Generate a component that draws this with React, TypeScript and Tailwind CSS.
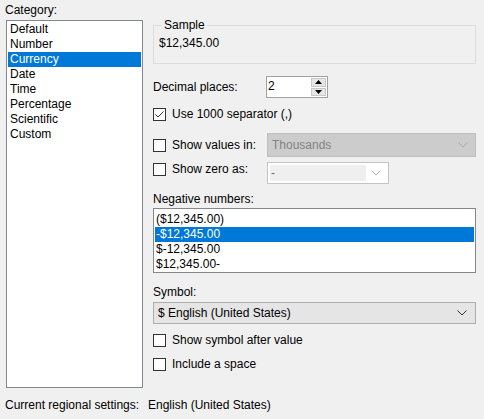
import React from "react"

const categories = ["Default", "Number", "Currency", "Date", "Time", "Percentage", "Scientific", "Custom"]
const negatives = ["($12,345.00)", "-$12,345.00", "$-12,345.00", "$12,345.00-"]

function Chevron({ color = "#606060" }: { color?: string }) {
  return (
    <svg width="10" height="6" viewBox="0 0 10 6" fill="none">
      <path d="M0.5 0.5 L5 5 L9.5 0.5" stroke={color} strokeWidth="1" />
    </svg>
  )
}

function Checkbox({ checked = false, label }: { checked?: boolean; label: string }) {
  return (
    <div className="flex h-[13px] items-center">
      <div className="flex h-[13px] w-[13px] items-center justify-center border border-[#333333] bg-white">
        {checked && (
          <svg width="11" height="11" viewBox="0 0 11 11" fill="none">
            <path d="M1.5 5.5 L4 8 L9.5 2.5" stroke="#333333" strokeWidth="1" />
          </svg>
        )}
      </div>
      <span className="ml-[6px]">{label}</span>
    </div>
  )
}

export default function App() {
  return (
    <div className="h-[419px] w-[484px] overflow-hidden bg-[#f0f0f0] font-['Liberation_Sans',Arial,sans-serif] text-[12px] leading-[15px] text-black">
      <div className="flex">
        <div className="ml-[6px] flex w-[137px] flex-col">
          <div className="-ml-[1px] mt-[3px]">Category:</div>
          <div className="mt-[2px] h-[368px] border border-[#828790] bg-white p-[1px]">
            {categories.map((c) => (
              <div
                key={c}
                className={
                  c === "Currency"
                    ? "h-[15px] bg-[#0078d7] pl-[2px] text-white"
                    : "h-[15px] pl-[2px]"
                }
              >
                {c}
              </div>
            ))}
          </div>
        </div>

        <div className="ml-[10px] flex w-[323px] flex-col">
          <fieldset className="mt-[18px] h-[46px] border border-[#dcdcdc] pl-[5px]">
            <legend className="ml-[3px] px-[2px] leading-[14px]">Sample</legend>
            <div className="mt-[4px]">$12,345.00</div>
          </fieldset>

          <div className="mt-[12px] flex h-[22px] items-center">
            <span className="w-[113px]">Decimal places:</span>
            <div className="flex h-[22px] w-[62px] items-stretch border border-[#a0a0a0] bg-white">
              <span className="flex-1 pl-[1px] leading-[18px]">2</span>
              <div className="m-[1px] flex w-[15px] flex-col gap-[1px]">
                <div className="flex flex-1 items-center justify-center border border-[#c8c8c8] bg-[#e6e6e6]">
                  <svg width="7" height="4" viewBox="0 0 7 4"><path d="M3.5 0 L7 4 L0 4 Z" fill="#000" /></svg>
                </div>
                <div className="flex flex-1 items-center justify-center border border-[#c8c8c8] bg-[#e6e6e6]">
                  <svg width="7" height="4" viewBox="0 0 7 4"><path d="M0 0 L7 0 L3.5 4 Z" fill="#000" /></svg>
                </div>
              </div>
            </div>
          </div>

          <div className="mt-[10px]">
            <Checkbox checked label="Use 1000 separator (,)" />
          </div>

          <div className="mt-[12px] flex items-start">
            <div className="mt-[6px] w-[114px]">
              <Checkbox label="Show values in:" />
            </div>
            <div className="flex h-[24px] flex-1 items-center justify-between border border-[#bfbfbf] bg-[#cccccc] pl-[4px] pr-[7px] text-[#838383]">
              <span>Thousands</span>
              <Chevron color="#a8a8a8" />
            </div>
          </div>

          <div className="mt-[5px] flex items-start">
            <div className="mt-[1px] w-[114px]">
              <Checkbox label="Show zero as:" />
            </div>
            <div className="flex h-[22px] w-[122px] items-stretch border border-[#c4c4c4] bg-white p-[2px]">
              <span className="flex-1 bg-[#efefef] pl-[1px] leading-[16px] text-[#6d6d6d]">-</span>
              <div className="flex w-[20px] items-center justify-center">
                <Chevron color="#b0b0b0" />
              </div>
            </div>
          </div>

          <div className="mt-[8px]">Negative numbers:</div>
          <div className="mt-[1px] h-[65px] border border-[#828790] bg-white px-[1px] pt-[3px]">
            {negatives.map((n, i) => (
              <div
                key={n}
                className={i === 1 ? "h-[15px] bg-[#0078d7] pl-[1px] text-white" : "h-[15px] pl-[1px]"}
              >
                {n}
              </div>
            ))}
          </div>

          <div className="mt-[12px]">Symbol:</div>
          <div className="mt-[2px] flex h-[22px] items-center justify-between border border-[#adadad] bg-[#e5e5e5] pl-[4px] pr-[8px]">
            <span>$ English (United States)</span>
            <Chevron color="#333333" />
          </div>

          <div className="mt-[10px]">
            <Checkbox label="Show symbol after value" />
          </div>
          <div className="mt-[11px]">
            <Checkbox label="Include a space" />
          </div>
        </div>
      </div>

      <div className="ml-[5px] mt-[10px] flex">
        <span className="w-[143px]">Current regional settings:</span>
        <span>English (United States)</span>
      </div>
    </div>
  )
}
